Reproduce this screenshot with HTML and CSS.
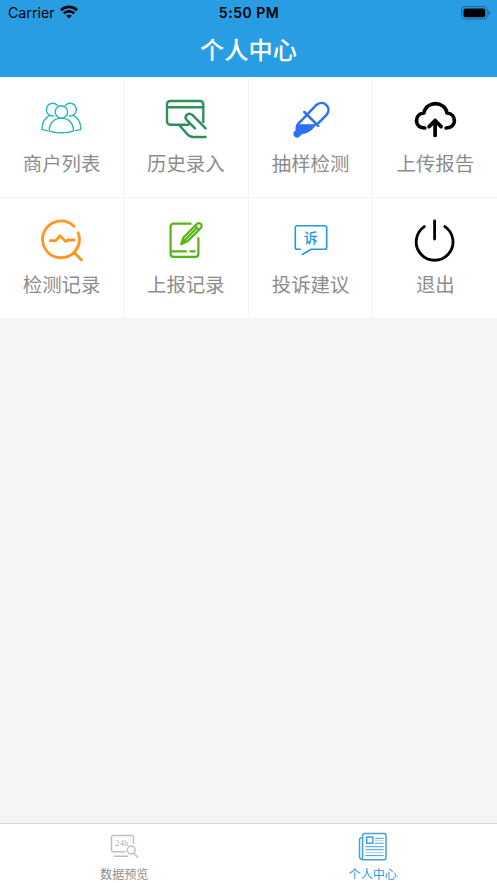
FILE: index.html
```html
<!DOCTYPE html>
<html lang="zh-CN">
<head>
<meta charset="utf-8">
<title>个人中心</title>
<link rel="stylesheet" href="styles.css">
</head>
<body>
<header class="header">
  <div class="status">
    <div class="carrier"><span>Carrier</span>
      <svg width="18" height="14" viewBox="0 0 18 14" fill="none" stroke="#000" stroke-width="2.7"><path d="M.9 5.2C5.4.7 12.6.7 17.1 5.2M3.8 8.4c2.9-2.9 7.5-2.9 10.4 0"/><path d="M9 13.6 6.2 10.8c1.6-1.5 4-1.5 5.6 0z" fill="#000" stroke="none"/></svg>
    </div>
    <div class="time">5:50 PM</div>
    <div class="battery">
      <svg width="29" height="14" viewBox="0 0 29 14"><rect x=".6" y=".6" width="25.6" height="12.4" rx="3.5" fill="none" stroke="#1b6795" stroke-width="1"/><rect x="2.5" y="2.4" width="21.8" height="8.8" rx="2" /><path d="M27.4 4.7c1.8.8 1.8 3.4 0 4.2z" fill="#165a82"/></svg>
    </div>
  </div>
  <h1 class="title">个人中心</h1>
</header>
<main class="grid">
  <a class="cell"><svg class="icon users" viewBox="0 0 48 48"><circle cx="23.4" cy="16.9" r="6.2"/><path d="M11.2 35.9c0-7.6 5-12.8 12.2-12.8s12.2 5.2 12.2 12.8c-5 2.4-19.4 2.4-24.4 0z"/><path d="M15.6 21A6.4 6.4 0 1 1 19.4 10.2M31.2 21a6.4 6.4 0 1 0-3.8-10.8M11.6 20.4C7 22.6 4 27.8 3.9 34.4c1.8.8 3.6 1.1 5.4 1.2M35.2 20.4c4.6 2.2 7.6 7.4 7.7 14-1.8.8-3.6 1.1-5.4 1.2"/></svg><span>商户列表</span></a>
  <a class="cell"><svg class="icon card" viewBox="0 0 48 48"><path d="M41.3 27V9.2A3.2 3.2 0 0 0 38.1 6H8.2A3.2 3.2 0 0 0 5 9.2v17.3a3.2 3.2 0 0 0 3.2 3.2h18.1M5 12.2h36.3M17 29.7l8.2 9.4q2.3 2.9 5.8 2.9h12.6M33 33.4l-8.2-8.2c-3.4-3.6 1.5-8.7 5.5-5.3l13.3 13.5"/></svg><span>历史录入</span></a>
  <a class="cell"><svg class="icon dropper" viewBox="0 0 48 48"><path d="M20.3 19.4l8.5-8.9c7.3-6.8 17 2 10.5 9.6l-9.2 9.2M17.3 17l14 13.8M19.7 20.1l-7.9 8c-2 2-2.2 3.6-1.9 6.2M28.9 28.5l-5.6 6.1"/><path class="fill" d="M10.7 29.2h17.5l-4.6 6.1c-2.2 2.7-5.2 3.6-8.7 3.9l-1.5 1.6a3.8 3.8 0 1 1-4.6-5.5c-.3-2.4.3-4.5 1.9-6.1z"/></svg><span>抽样检测</span></a>
  <a class="cell"><svg class="icon cloud" viewBox="0 0 48 48"><path d="M13.8 33C2.6 33 3.2 18.6 12.8 18c2.9-12.4 20.4-12.4 23.3 0 9.6.6 10.2 15-1 15M24.1 25.4v15M18.1 31.6l6-6.1 6 6.1"/></svg><span>上传报告</span></a>
  <a class="cell"><svg class="icon search" viewBox="0 0 48 48"><path d="M35.9 10.3A18.4 18.4 0 1 0 40.1 16.7M36.5 36.7l7 7.2M12.2 24.7h5.7l4-5 5.9 5.7 2.3-1.4h6.1"/></svg><span>检测记录</span></a>
  <a class="cell"><svg class="icon note" viewBox="0 0 48 48"><path d="M28.6 7.7H11.5a2.9 2.9 0 0 0-2.9 2.9V38a2.9 2.9 0 0 0 2.9 2.9h22a2.9 2.9 0 0 0 2.9-2.9V22M9.3 35.3h14.6M28.5 35.3h4.3"/><path d="M19.2 28.2l2.3-6.8L34.3 8.4c3-2.8 7.1.4 4.5 3.5L25.9 25zM32.9 10l4 4M21.5 25.5l12-12.2"/></svg><span>上报记录</span></a>
  <a class="cell"><svg class="icon bubble" viewBox="0 0 48 48"><path d="M13.3 33.3h-3.2a1.8 1.8 0 0 1-1.8-1.8v-20a1.8 1.8 0 0 1 1.8-1.8h27.8a1.8 1.8 0 0 1 1.8 1.8v20a1.8 1.8 0 0 1-1.8 1.8H24.1l-8.7 5.2"/><text x="23.8" y="27.2" text-anchor="middle">诉</text></svg><span>投诉建议</span></a>
  <a class="cell"><svg class="icon power" viewBox="0 0 48 48"><path d="M13.3 10.6a18.4 18.4 0 1 0 20.6 0M23.6 4.8v18.2"/></svg><span>退出</span></a>
</main>
<nav class="tabs">
  <a class="tab"><svg class="tab-icon monitor" viewBox="0 0 32 32"><path d="M17 20.7H5.1a1.6 1.6 0 0 1-1.6-1.6V6.2a1.6 1.6 0 0 1 1.6-1.6h18.8a1.6 1.6 0 0 1 1.6 1.6v6.2M6.3 25.3h13.5M25.9 22.1l3.5 4"/><circle cx="23.2" cy="19" r="3.9"/><text x="13.8" y="15.4" text-anchor="middle" textLength="13.4">24h</text></svg><span>数据预览</span></a>
  <a class="tab active"><svg class="tab-icon news" viewBox="0 0 32 32"><path d="M5.6 6.7H4.5a2 2 0 0 0-2 2v17a3 3 0 0 0 3 3H27a2 2 0 0 0 2-2V4.4a2 2 0 0 0-2-2H7.6a2 2 0 0 0-2 2v21.5c0 1.6-.7 2.6-1.6 2.6"/><path d="M9.7 6h6.2v6.2H9.7z"/><path class="rows" d="M18.3 7.4h8M18.3 12.3h8M8.8 15.7h17.5M8.8 18.7h17.5M8.8 24.6h17.5"/><path class="rows faint" d="M18.3 9.8h8M8.8 21.7h17.5"/></svg><span>个人中心</span></a>
</nav>
</body>
</html>
```
FILE: styles.css
```css
* { box-sizing: border-box; }
body {
  margin: 0;
  height: 883px;
  display: flex;
  flex-direction: column;
  background: #f5f5f5;
  font-family: "Noto Sans CJK SC", sans-serif;
  overflow: hidden;
}
.header { height: 77px; background: #289de3; }
.status {
  height: 25px;
  display: grid;
  grid-template-columns: 1fr auto 1fr;
  align-items: center;
  padding: 1px 7px 0 8px;
  font: 14.2px/24px Inter, sans-serif;
  color: #000;
}
.carrier { display: flex; align-items: center; gap: 5px; }
.carrier svg { margin-bottom: 2px; }
.time { font-weight: 600; font-size: 14px; letter-spacing: .5px; }
.battery { display: flex; justify-content: flex-end; padding-bottom: 1px; }
.title {
  margin: 0;
  height: 48px;
  font-size: 24.2px;
  line-height: 47px;
  font-weight: 500;
  color: #fff;
  text-align: center;
}
.grid { display: grid; grid-template-columns: repeat(4, 1fr); grid-template-rows: 121px 120px; }
.cell {
  display: flex;
  flex-direction: column;
  align-items: center;
  padding: 18px 0 0;
  background: #fff;
  border-right: 1px solid #f3f3f3;
  border-bottom: 1px solid #f3f3f3;
  font-size: 19.4px;
  line-height: 28px;
  color: #8c8c8c;
}
.cell:nth-child(4n) { border-right: 0; }
.cell:nth-child(4n + 3) { padding-left: 1px; }
.cell:nth-child(4n) { padding-left: 1px; }
.cell:nth-child(n + 5) { border-bottom-color: #fff; }
.cell span { margin-top: 6px; }
.icon { width: 48px; height: 48px; flex: none; }
.icon, .tab-icon { fill: none; stroke-linecap: round; stroke-linejoin: round; }
.users { stroke: #27b5bb; stroke-width: 1.4; }
.card { stroke: #2c9159; stroke-width: 2.4; }
.dropper { stroke: #2b70f6; stroke-width: 2.5; }
.dropper .fill { fill: #2b70f6; stroke: none; }
.cloud { stroke: #000; stroke-width: 3.7; }
.search { stroke: #ff961f; stroke-width: 2.8; }
.note { stroke: #58b410; stroke-width: 2.2; }
.bubble { stroke: #2399df; stroke-width: 1.6; }
.bubble text { fill: #2399df; stroke: none; font-size: 14px; font-weight: 500; }
.power { stroke: #000; stroke-width: 2.8; }
.tabs {
  margin-top: auto;
  height: 60px;
  display: grid;
  grid-template-columns: 1fr 1fr;
  background: #fff;
  border-top: 1px solid #d5d5d5;
}
.tab {
  display: flex;
  flex-direction: column;
  align-items: center;
  padding-top: 7px;
  font-size: 12.1px;
  line-height: 18px;
  color: #8e8e8e;
}
.tab.active { color: #289de3; }
.tab-icon { width: 32px; height: 32px; flex: none; }
.tab span { margin-top: 2px; }
.monitor { stroke: #bfbfbf; stroke-width: 1.5; }
.monitor text { fill: #b0b0b0; stroke: none; font: 9px "Liberation Serif", serif; }
.news { stroke: #459fe3; stroke-width: 1.5; }
.news .rows { stroke-width: 1; }
.news .faint { opacity: .5; }
```
